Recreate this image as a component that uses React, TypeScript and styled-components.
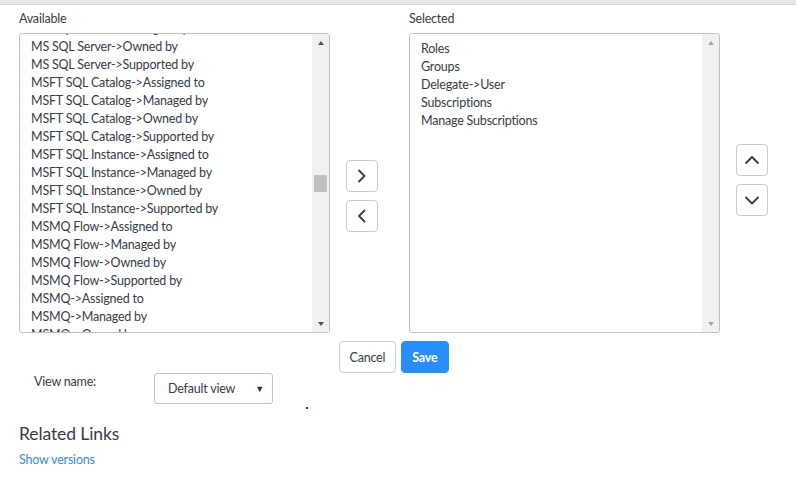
import React from 'react';
import styled, {createGlobalStyle} from 'styled-components';

const available = [
  'MS SQL Server->Managed by',
  'MS SQL Server->Owned by',
  'MS SQL Server->Supported by',
  'MSFT SQL Catalog->Assigned to',
  'MSFT SQL Catalog->Managed by',
  'MSFT SQL Catalog->Owned by',
  'MSFT SQL Catalog->Supported by',
  'MSFT SQL Instance->Assigned to',
  'MSFT SQL Instance->Managed by',
  'MSFT SQL Instance->Owned by',
  'MSFT SQL Instance->Supported by',
  'MSMQ Flow->Assigned to',
  'MSMQ Flow->Managed by',
  'MSMQ Flow->Owned by',
  'MSMQ Flow->Supported by',
  'MSMQ->Assigned to',
  'MSMQ->Managed by',
  'MSMQ->Owned by',
];

const selected = ['Roles', 'Groups', 'Delegate->User', 'Subscriptions', 'Manage Subscriptions'];

const GlobalStyle = createGlobalStyle`
  html, body {
    margin: 0;
    padding: 0;
    background: #fff;
  }
  body {
    font-family: Lato, 'Liberation Sans', sans-serif;
    font-size: 12.5px;
    letter-spacing: -0.2px;
    color: #343d47;
  }
`;

const TopBar = styled.div`
  height: 4px;
  background: #e6e7e9;
  border-bottom: 1px solid #d3d5d8;
`;

const Bucket = styled.div`
  display: flex;
  align-items: flex-start;
  padding: 4px 0 0 19px;
`;

const Column = styled.div<{$left?: number}>`
  display: flex;
  flex-direction: column;
  margin-left: ${(p) => p.$left ?? 0}px;
`;

const Label = styled.div`
  line-height: 18px;
  height: 18px;
  padding-top: 1px;
  margin-bottom: 5px;
`;

const ListBox = styled.div`
  box-sizing: border-box;
  width: 311px;
  height: 300px;
  border: 1px solid #bdc0c4;
  border-radius: 3px;
  display: flex;
  overflow: hidden;
  background: #fff;
`;

const Options = styled.div<{$offset: number}>`
  flex: 1;
  overflow: hidden;
  padding: ${(p) => (p.$offset > 0 ? p.$offset : 0)}px 0 0 11px;

  & > div:first-child {
    margin-top: ${(p) => (p.$offset < 0 ? p.$offset : 0)}px;
  }
`;

const Option = styled.div`
  line-height: 18px;
  height: 18px;
  white-space: nowrap;
`;

const Track = styled.div`
  width: 17px;
  background: #f1f1f1;
  display: flex;
  flex-direction: column;
`;

const ArrowCell = styled.div`
  height: 17px;
  display: flex;
  align-items: center;
  justify-content: center;
`;

const Triangle = styled.div<{$down?: boolean; $faint?: boolean}>`
  width: 0;
  height: 0;
  border-left: 3.5px solid transparent;
  border-right: 3.5px solid transparent;
  ${(p) => (p.$down ? 'border-top' : 'border-bottom')}: 4px solid ${(p) => (p.$faint ? '#a3a3a3' : '#505050')};
`;

const Thumb = styled.div`
  margin: 124px 2px 0;
  height: 17px;
  background: #c1c1c1;
`;

const Spacer = styled.div`
  flex: 1;
`;

const MoveColumn = styled.div<{$top: number; $left: number}>`
  display: flex;
  flex-direction: column;
  gap: 8px;
  padding-top: ${(p) => p.$top}px;
  margin-left: ${(p) => p.$left}px;
`;

const IconButton = styled.button`
  box-sizing: border-box;
  width: 32px;
  height: 32px;
  padding: 0;
  border: 1px solid #c8cbcf;
  border-radius: 4px;
  background: #fff;
  display: flex;
  align-items: center;
  justify-content: center;
  color: #343d47;
`;

const Actions = styled.div`
  width: 749px;
  margin: 8px 0 0 19px;
  display: flex;
  justify-content: center;
  gap: 5px;
`;

const Button = styled.button<{$primary?: boolean}>`
  box-sizing: border-box;
  height: 32px;
  padding: 0 10px;
  border-radius: 4px;
  font-family: inherit;
  font-size: 12.5px;
  letter-spacing: -0.2px;
  border: 1px solid ${(p) => (p.$primary ? '#278efc' : '#c8cbcf')};
  background: ${(p) => (p.$primary ? '#278efc' : '#fff')};
  color: ${(p) => (p.$primary ? '#fff' : '#343d47')};
  font-weight: ${(p) => (p.$primary ? 700 : 400)};
`;

const ViewRow = styled.div`
  display: flex;
  align-items: flex-start;
  padding-left: 34px;
`;

const ViewLabel = styled.div`
  width: 120px;
  line-height: 18px;
`;

const Select = styled.div`
  box-sizing: border-box;
  width: 119px;
  height: 31px;
  border: 1px solid #bdc0c4;
  border-radius: 3px;
  display: flex;
  align-items: center;
  justify-content: space-between;
  padding: 0 8px 0 13px;
`;

const Caret = styled.span`
  font-size: 9px;
  color: #2e2e2e;
`;

const Dot = styled.div`
  width: 2px;
  height: 2px;
  background: #2a2aa8;
  margin: 34px 0 0 33px;
`;

const Related = styled.div`
  padding: 14px 0 0 19px;
`;

const Heading = styled.div`
  font-size: 17.5px;
  letter-spacing: -0.1px;
  line-height: 22px;
  color: #343d47;
`;

const Link = styled.a`
  display: inline-block;
  margin-top: 6px;
  line-height: 18px;
  color: #3b8ad8;
  text-decoration: none;
`;

const Chevron = ({dir}: {dir: 'left' | 'right' | 'up' | 'down'}) => {
  const d = {
    right: 'M3 1.5 L8.5 7 L3 12.5',
    left: 'M8.5 1.5 L3 7 L8.5 12.5',
    up: 'M1 9 L7 3 L13 9',
    down: 'M1 3.5 L7 9.5 L13 3.5',
  }[dir];
  const horiz = dir === 'left' || dir === 'right';
  return (
    <svg width={horiz ? 12 : 14} height={horiz ? 14 : 12} viewBox={horiz ? '0 0 12 14' : '0 0 14 12'} fill="none">
      <path d={d} stroke="currentColor" strokeWidth="1.8" strokeLinecap="round" strokeLinejoin="round" />
    </svg>
  );
};

const Scroller = ({thumb, faint}: {thumb?: boolean; faint?: boolean}) => (
  <Track>
    <ArrowCell>
      <Triangle $faint={faint} />
    </ArrowCell>
    {thumb && <Thumb />}
    <Spacer />
    <ArrowCell>
      <Triangle $down $faint={faint} />
    </ArrowCell>
  </Track>
);

export default function App() {
  return (
    <>
      <GlobalStyle />
      <TopBar />
      <Bucket>
        <Column>
          <Label>Available</Label>
          <ListBox>
            <Options $offset={-14}>
              {available.map((o) => (
                <Option key={o}>{o}</Option>
              ))}
            </Options>
            <Scroller thumb />
          </ListBox>
        </Column>
        <MoveColumn $top={151} $left={16}>
          <IconButton>
            <Chevron dir="right" />
          </IconButton>
          <IconButton>
            <Chevron dir="left" />
          </IconButton>
        </MoveColumn>
        <Column $left={31}>
          <Label>Selected</Label>
          <ListBox>
            <Options $offset={6}>
              {selected.map((o) => (
                <Option key={o}>{o}</Option>
              ))}
            </Options>
            <Scroller faint />
          </ListBox>
        </Column>
        <MoveColumn $top={135} $left={16}>
          <IconButton>
            <Chevron dir="up" />
          </IconButton>
          <IconButton>
            <Chevron dir="down" />
          </IconButton>
        </MoveColumn>
      </Bucket>
      <Actions>
        <Button>Cancel</Button>
        <Button $primary>Save</Button>
      </Actions>
      <ViewRow>
        <ViewLabel>View name:</ViewLabel>
        <Select>
          <span>Default view</span>
          <Caret>▼</Caret>
        </Select>
        <Dot />
      </ViewRow>
      <Related>
        <Heading>Related Links</Heading>
        <Link href="#">Show versions</Link>
      </Related>
    </>
  );
}
